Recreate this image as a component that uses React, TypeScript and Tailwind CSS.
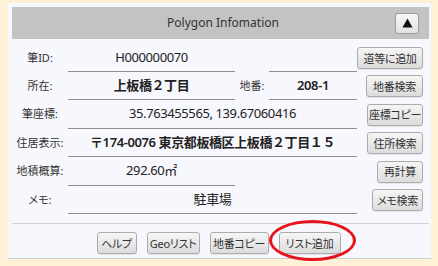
import React from 'react';

const font = { fontFamily: '"Noto Sans", "Noto Sans CJK JP", sans-serif' };

function Btn({ children, w }: { children: React.ReactNode; w: string }) {
  return (
    <button
      className={`${w} flex h-[22px] shrink-0 items-center justify-center rounded-[3px] border border-[#acacac] bg-linear-to-b from-[#f6f6f6] to-[#dcdcdc] text-[11px] leading-none tracking-[-0.3px] whitespace-nowrap text-[#333] shadow-[0_1px_1px_rgba(0,0,0,0.08)] [font-feature-settings:'palt']`}
    >
      {children}
    </button>
  );
}

function Label({ children, className = 'w-[56px]' }: { children: React.ReactNode; className?: string }) {
  return (
    <div className={`${className} shrink-0 text-center text-[11px] text-[#333] [font-feature-settings:'palt']`}>
      {children}
    </div>
  );
}

function Field({
  children,
  className,
  bold,
}: {
  children?: React.ReactNode;
  className: string;
  bold?: boolean;
}) {
  return (
    <div
      className={`${className} flex h-full shrink-0 items-center justify-center border-b border-[#8f8f8f] text-[13px] tracking-[-0.4px] whitespace-nowrap text-[#222] ${bold ? 'font-semibold' : ''}`}
    >
      {children}
    </div>
  );
}

function Row({
  h,
  children,
  action,
}: {
  h: string;
  children: React.ReactNode;
  action: React.ReactNode;
}) {
  return (
    <div className={`flex ${h} items-center`}>
      {children}
      <div className="flex flex-1 justify-end">{action}</div>
    </div>
  );
}

export default function App() {
  return (
    <div className="relative h-[266px] w-[438px] bg-[#fff1d5] pt-[3px] pl-[8px]" style={font}>
      <div className="flex w-[423px] flex-col border-b border-[#cfcfcf] bg-[#f7f8fd] pt-[4px] pr-[2px] pl-[4px]">
        {/* Header */}
        <div className="flex h-[32px] items-center bg-[#c3c3c3]">
          <div className="w-[34px]" />
          <div className="flex-1 pl-[5px] text-center text-[12px] text-[#333]">Polygon Infomation</div>
          <button className="mr-[10px] flex h-[21px] w-[24px] items-center justify-center rounded-[3px] border border-[#9c9c9c] bg-linear-to-b from-[#f7f7f7] to-[#e2e2e2]">
            <svg width="11" height="10" viewBox="0 0 11 10">
              <polygon points="5.5,0.5 10.5,9.5 0.5,9.5" fill="#111" />
            </svg>
          </button>
        </div>

        {/* Rows */}
        <div className="mt-[5px] flex flex-col pr-[6px]">
          <Row h="h-[28px]" action={<Btn w="w-[66px]">道等に追加</Btn>}>
            <Label>筆ID:</Label>
            <Field className="w-[167px]">H000000070</Field>
            <div className="w-[34px]" />
            <Field className="w-[88px]" />
          </Row>
          <Row h="h-[28px]" action={<Btn w="w-[57px]">地番検索</Btn>}>
            <Label>所在:</Label>
            <Field className="w-[167px]" bold>
              上板橋２丁目
            </Field>
            <Label className="w-[34px]">地番:</Label>
            <Field className="w-[88px]" bold>
              208-1
            </Field>
          </Row>
          <Row h="h-[29px]" action={<Btn w="w-[56px]">座標コピー</Btn>}>
            <Label>筆座標:</Label>
            <Field className="w-[289px]">35.763455565, 139.67060416</Field>
          </Row>
          <Row h="h-[28px]" action={<Btn w="w-[56px]">住所検索</Btn>}>
            <Label>住居表示:</Label>
            <Field className="w-[289px]" bold>
              〒174-0076 東京都板橋区上板橋２丁目１５
            </Field>
          </Row>
          <Row h="h-[29px]" action={<Btn w="w-[46px]">再計算</Btn>}>
            <Label>地積概算:</Label>
            <Field className="w-[167px]">292.60㎡</Field>
          </Row>
          <Row h="h-[28px]" action={<Btn w="w-[51px]">メモ検索</Btn>}>
            <Label>メモ:</Label>
            <Field className="w-[289px]">駐車場</Field>
          </Row>
        </div>

        {/* Footer */}
        <div className="mt-[9px] flex justify-center gap-[10px] border-t border-[#d4d4d4] pt-[8px] pr-[4px] pb-[4px]">
          <Btn w="w-[40px]">ヘルプ</Btn>
          <Btn w="w-[53px]">Geoリスト</Btn>
          <Btn w="w-[59px]">地番コピー</Btn>
          <Btn w="w-[62px]">リスト追加</Btn>
        </div>
      </div>

      {/* annotation */}
      <div className="absolute top-[220px] left-[269px] h-[41px] w-[87px] rounded-[50%] border-[3.5px] border-[#e6131b]" />
    </div>
  );
}
